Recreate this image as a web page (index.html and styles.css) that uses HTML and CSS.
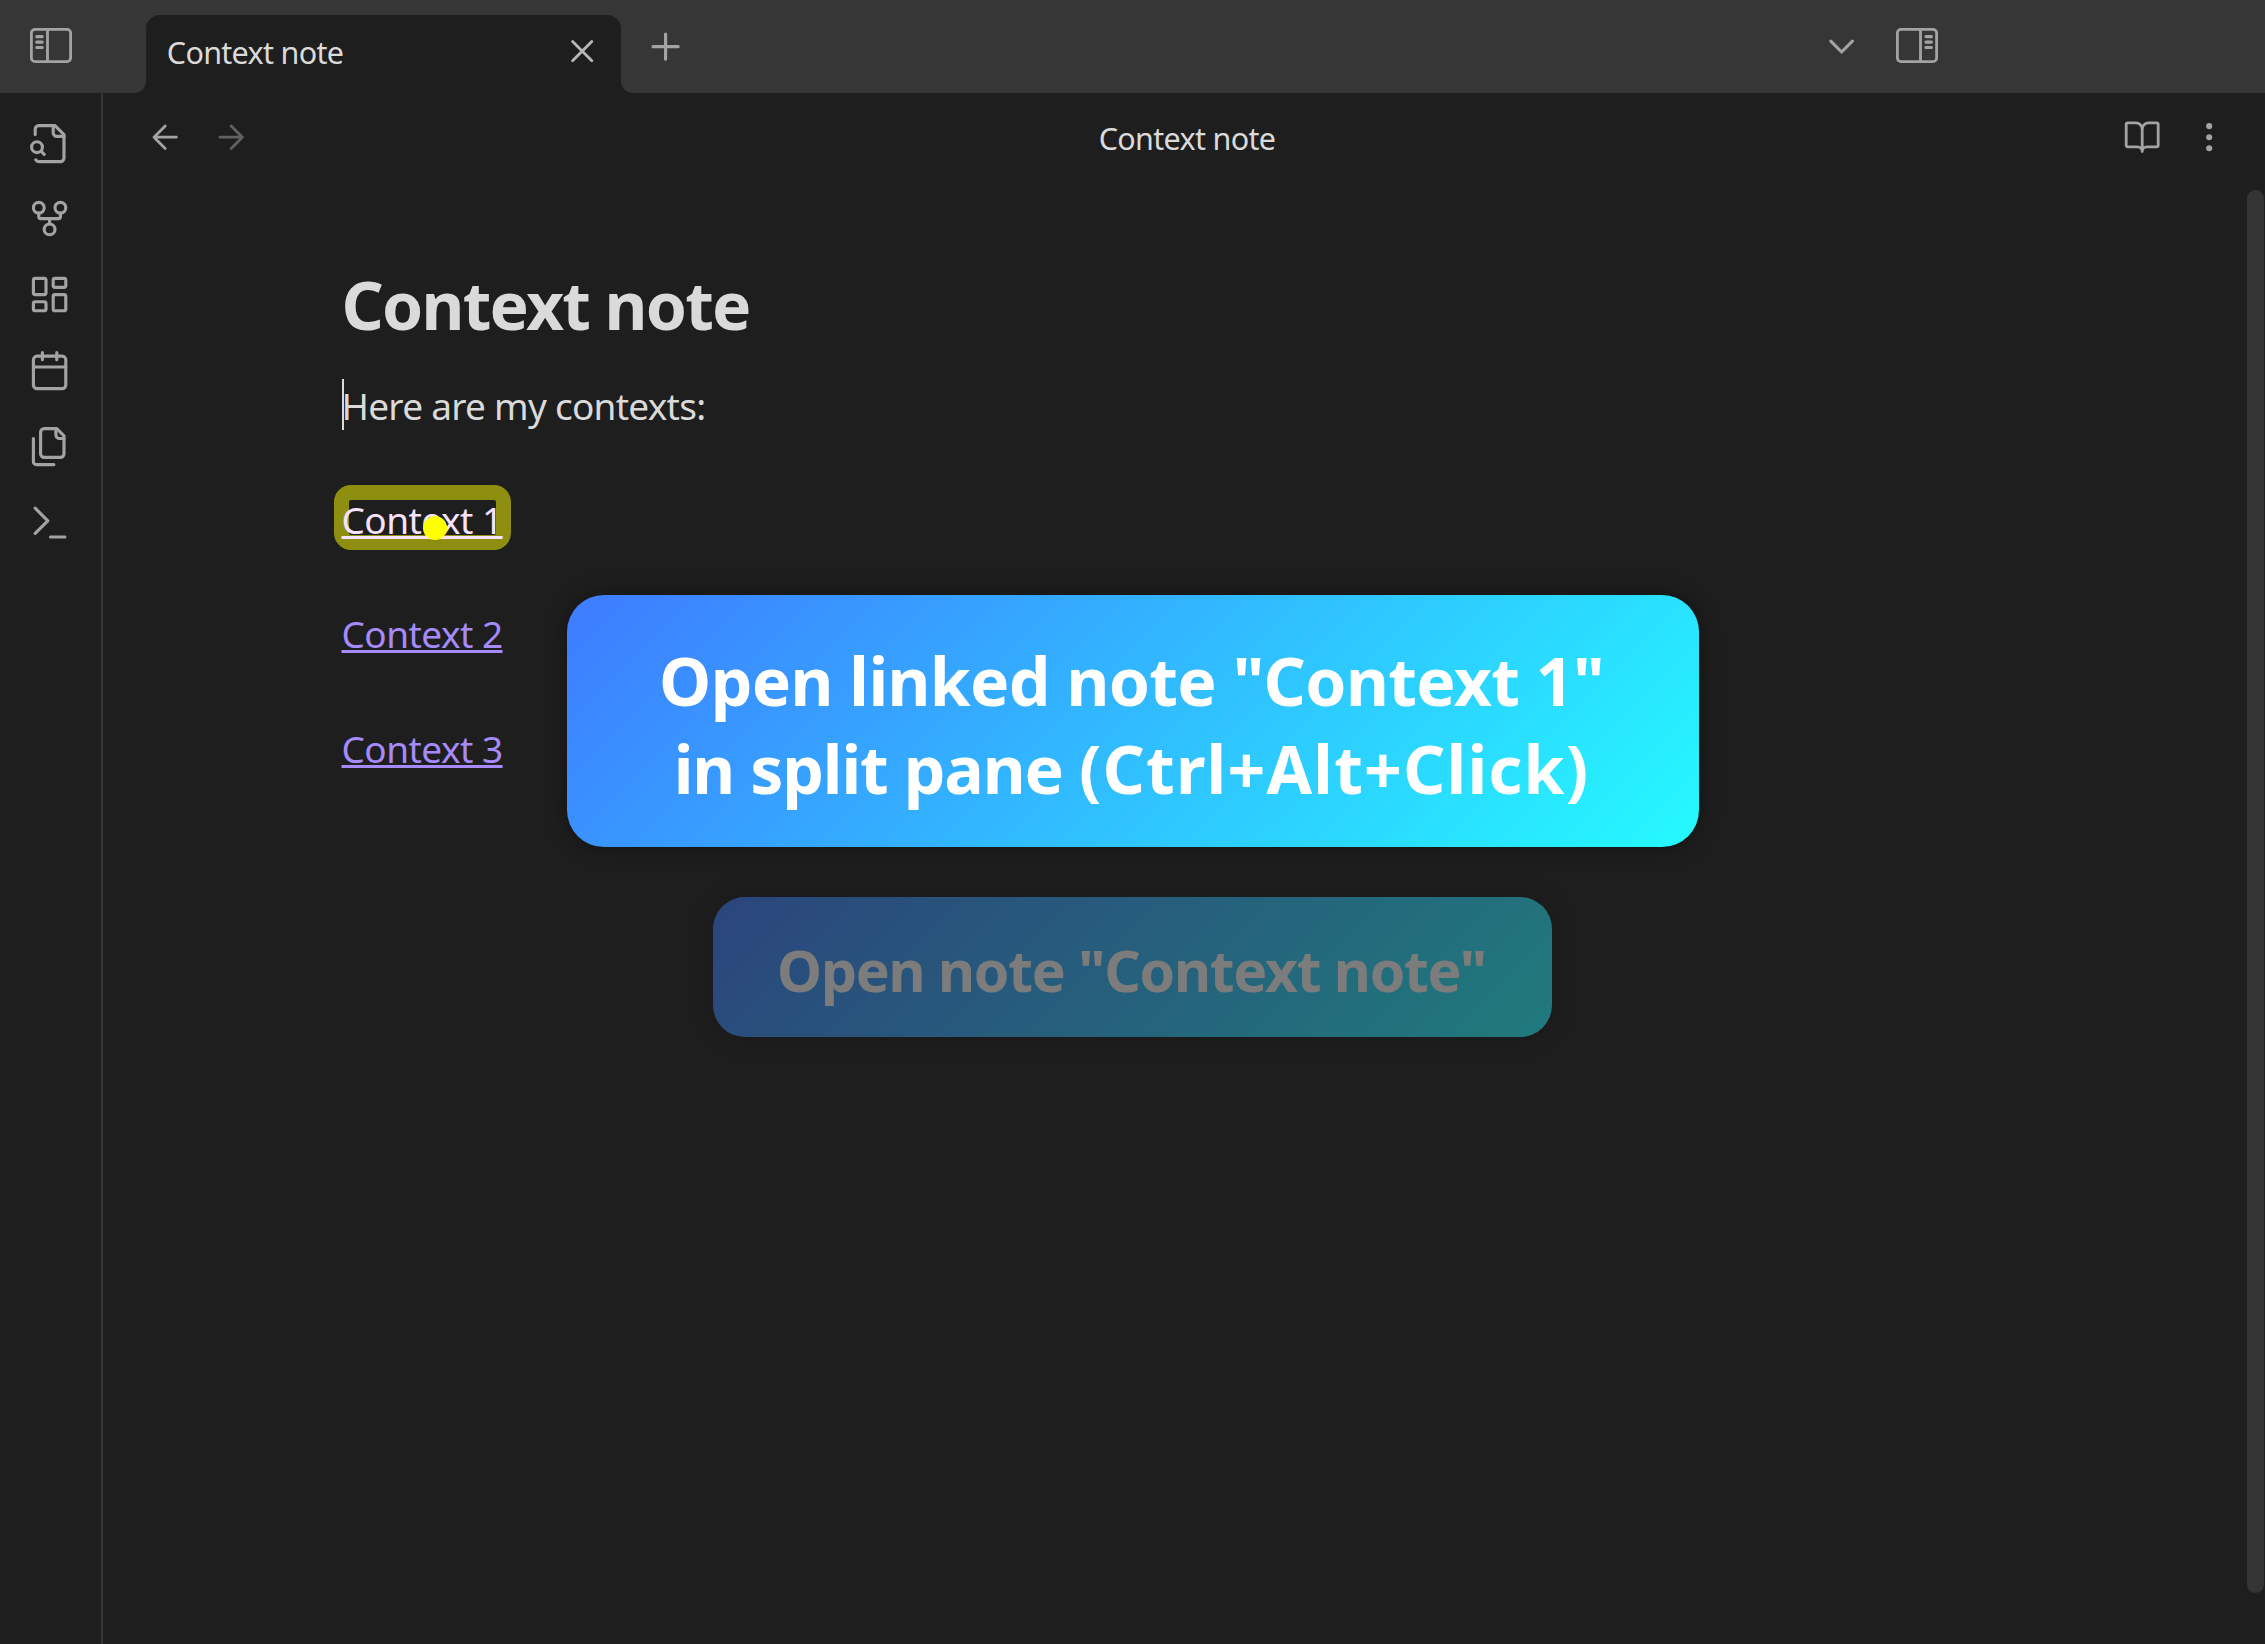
FILE: index.html
```html
<!DOCTYPE html>
<html lang="en">
<head>
<meta charset="utf-8">
<title>Context note</title>
<link rel="stylesheet" href="styles.css">
</head>
<body>
<div class="app">
  <header class="titlebar">
    <div class="titlebar-side">
      <svg class="toggle" viewBox="0 0 44 38"><rect x="2.4" y="2.4" width="39.2" height="32.2" rx="3.6"/><path d="M18.5 2.4v32.2"/><path class="bars" d="M7.8 9.6h5.4M7.8 15.1h5.4M7.8 20.5h5.4"/></svg>
    </div>
    <div class="tab">
      <span class="tab-title">Context note</span>
      <svg class="icon-s close" viewBox="0 0 24 24"><path d="M18 6 6 18M6 6l12 12"/></svg>
    </div>
    <svg class="icon new-tab" viewBox="0 0 24 24"><path d="M5 12h14M12 5v14"/></svg>
    <div class="titlebar-end">
      <svg class="icon" viewBox="0 0 24 24"><path d="m6 9 6 6 6-6"/></svg>
      <svg class="toggle" viewBox="0 0 44 38"><rect x="2.4" y="2.4" width="39.2" height="32.2" rx="3.6"/><path d="M25.5 2.4v32.2"/><path class="bars" d="M31 9.6h5.4M31 15.1h5.4M31 20.5h5.4"/></svg>
    </div>
  </header>
  <div class="workspace">
    <nav class="ribbon">
      <svg class="icon" viewBox="0 0 24 24"><path d="M14 2v4a2 2 0 0 0 2 2h4"/><path d="M4.27 21a2 2 0 0 0 1.73 1H18a2 2 0 0 0 2-2V7l-5-5H6a2 2 0 0 0-2 2v3"/><path d="m9 18-1.5-1.5"/><circle cx="5" cy="14" r="3"/></svg>
      <svg class="icon" viewBox="0 0 24 24"><circle cx="12" cy="18" r="3"/><circle cx="6" cy="6" r="3"/><circle cx="18" cy="6" r="3"/><path d="M18 9v2c0 .6-.4 1-1 1H7c-.6 0-1-.4-1-1V9M12 12v3"/></svg>
      <svg class="icon" viewBox="0 0 24 24"><rect x="3" y="3" width="7" height="9" rx="1"/><rect x="14" y="3" width="7" height="5" rx="1"/><rect x="14" y="12" width="7" height="9" rx="1"/><rect x="3" y="16" width="7" height="5" rx="1"/></svg>
      <svg class="icon" viewBox="0 0 24 24"><rect x="3" y="4" width="18" height="18" rx="2"/><path d="M16 2v4M8 2v4M3 10h18"/></svg>
      <svg class="icon" viewBox="0 0 24 24"><path d="M15.5 2v3.5a2 2 0 0 0 2 2H20"/><path d="M9 18a2 2 0 0 1-2-2V4a2 2 0 0 1 2-2h7l4 4v10a2 2 0 0 1-2 2Z"/><path d="M3 7.6v12.8A1.6 1.6 0 0 0 4.6 22h9.8"/></svg>
      <svg class="icon" viewBox="0 0 24 24"><path d="m4 18 7-7-7-7M12.5 20h8"/></svg>
    </nav>
    <main class="pane">
      <div class="view-header">
        <div class="nav-buttons">
          <svg class="icon-s" viewBox="0 0 24 24"><path d="m12 19-7-7 7-7M19 12H5"/></svg>
          <svg class="icon-s disabled" viewBox="0 0 24 24"><path d="M5 12h14M12 5l7 7-7 7"/></svg>
        </div>
        <span class="view-title">Context note</span>
        <div class="view-actions">
          <svg class="icon-s" viewBox="0 0 24 24"><path d="M12 7v14M3 18a1 1 0 0 1-1-1V4a1 1 0 0 1 1-1h5a4 4 0 0 1 4 4 4 4 0 0 1 4-4h5a1 1 0 0 1 1 1v13a1 1 0 0 1-1 1h-6a3 3 0 0 0-3 3 3 3 0 0 0-3-3z"/></svg>
          <svg class="icon-s dots" viewBox="0 0 24 24"><circle cx="12" cy="5.1" r="1.9"/><circle cx="12" cy="12" r="1.9"/><circle cx="12" cy="18.9" r="1.9"/></svg>
        </div>
      </div>
      <div class="view-content">
        <article class="note">
          <h1>Context note</h1>
          <p class="intro">Here are my contexts:</p>
          <p><a class="active">Context 1</a></p>
          <p><a>Context 2</a></p>
          <p><a>Context 3</a></p>
        </article>
        <div class="scrollbar"></div>
      </div>
    </main>
  </div>
  <div class="toasts">
    <div class="toast">Open linked note "Context 1"<br><span class="second">in split pane <span class="keys">(Ctrl+Alt+Click)</span></span></div>
    <div class="toast previous">Open note "Context note"</div>
  </div>
</div>
</body>
</html>
```
FILE: styles.css
```css
*,
*::before,
*::after { box-sizing: border-box; }

body {
  margin: 0;
  background: #1e1e1e;
  color: #dadada;
  font-family: "Noto Sans", "Open Sans", sans-serif;
}

.app {
  position: relative;
  display: flex;
  flex-direction: column;
  width: 2265px;
  height: 1644px;
  overflow: hidden;
}

svg {
  display: block;
  flex: none;
  fill: none;
  stroke: #a3a3a3;
  stroke-width: 1.75;
  stroke-linecap: round;
  stroke-linejoin: round;
}
.icon { width: 43.2px; height: 43.2px; }
.icon-s { width: 38.4px; height: 38.4px; }
.toggle { width: 44px; height: 38px; stroke-width: 2.8; }
.toggle .bars { stroke-width: 3.2; }
.disabled { opacity: .5; }
.dots { fill: #a3a3a3; stroke: none; }

/* Title bar */
.titlebar {
  display: flex;
  align-items: flex-start;
  height: 93px;
  flex: none;
  background: #363636;
}
.titlebar-side { width: 146px; padding: 27px 0 0 29px; }
.tab {
  position: relative;
  display: flex;
  align-items: center;
  justify-content: space-between;
  width: 475px;
  height: 78px;
  margin-top: 15px;
  padding: 0 19.5px 6px 20.8px;
  border-radius: 14px 14px 0 0;
  background: #1e1e1e;
}
.tab::before,
.tab::after {
  content: "";
  position: absolute;
  bottom: 0;
  width: 12px;
  height: 12px;
}
.tab::before { right: 100%; background: radial-gradient(circle at 0 0, transparent 11.5px, #1e1e1e 12.5px); }
.tab::after { left: 100%; background: radial-gradient(circle at 100% 0, transparent 11.5px, #1e1e1e 12.5px); }
.tab-title,
.view-title {
  font-size: 30.5px;
  line-height: 42px;
  letter-spacing: -.69px;
  white-space: nowrap;
}
.tab-title { padding-top: 2px; }
.close { stroke: #b8b8b8; }
.new-tab { margin: 25px 0 0 23.4px; }
.titlebar-end {
  display: flex;
  gap: 31.4px;
  margin-left: auto;
  padding: 25px 326px 0 0;
}
.titlebar-end .toggle { margin-top: 2px; }

/* Left ribbon */
.workspace { display: flex; flex: 1; min-height: 0; }
.ribbon {
  display: flex;
  flex-direction: column;
  gap: 32.7px;
  width: 103px;
  padding: 28.6px 0 0 28.4px;
  border-right: 2px solid #363636;
}

/* Note pane */
.pane { display: flex; flex-direction: column; flex: 1; }
.view-header {
  display: grid;
  grid-template-columns: 1fr auto 1fr;
  align-items: center;
  height: 97px;
  padding: 0 37px 8px 43px;
}
.nav-buttons { display: flex; gap: 28px; }
.view-actions { display: flex; justify-content: flex-end; gap: 27.8px; }
.view-content { display: flex; justify-content: space-between; flex: 1; }
.scrollbar {
  width: 17px;
  height: 1403px;
  margin-right: 1px;
  border-radius: 8.5px;
  background: #353535;
}

.note {
  padding: 73.5px 0 0 238.5px;
  font-size: 37px;
  line-height: 57.2px;
  letter-spacing: -.73px;
}
.note h1 {
  margin: 0 0 33px;
  font-size: 66px;
  line-height: 80px;
  letter-spacing: -1.77px;
}
.note p { margin: 0 0 57.2px; }
.note a {
  color: #a68af9;
  letter-spacing: -.53px;
  text-decoration: underline 3px;
  text-underline-offset: 2px;
  text-decoration-skip-ink: none;
}
.intro { position: relative; }
.intro::before {
  content: "";
  position: absolute;
  left: 0;
  top: 2px;
  width: 2px;
  height: 51px;
  background: #dadada;
}

/* Highlighted link with the click marker */
.note .active { position: relative; z-index: 0; color: #f6e2ff; }
.active::before {
  content: "";
  position: absolute;
  z-index: -1;
  left: -7.5px;
  top: -9px;
  width: 176.5px;
  height: 65.5px;
  border: 15px solid #8e8f10;
  border-radius: 17px;
}
.active::after {
  content: "";
  position: absolute;
  left: 81px;
  top: 22.5px;
  width: 24px;
  height: 24px;
  border-radius: 50%;
  background: #ff0;
}

/* Action toasts */
.toasts {
  position: absolute;
  inset: 595px 0 auto 0;
  display: flex;
  flex-direction: column;
  align-items: center;
  gap: 50px;
  color: #fff;
  font-weight: 700;
  text-align: center;
  white-space: nowrap;
}
.toast {
  width: 1132px;
  height: 252px;
  padding: 40.6px 2px 0 0;
  border-radius: 37px;
  background: linear-gradient(135deg, #3e7bff, #24faff);
  box-shadow: 0 0 22px rgba(0, 0, 0, .4);
  font-size: 66px;
  line-height: 88px;
  letter-spacing: -.63px;
}
.second { letter-spacing: -1.1px; }
.keys { letter-spacing: 1.2px; }
.previous {
  width: 839px;
  height: 140px;
  padding-top: 28.6px;
  border-radius: 32px;
  font-size: 57px;
  letter-spacing: -1.22px;
  opacity: .42;
}
```
